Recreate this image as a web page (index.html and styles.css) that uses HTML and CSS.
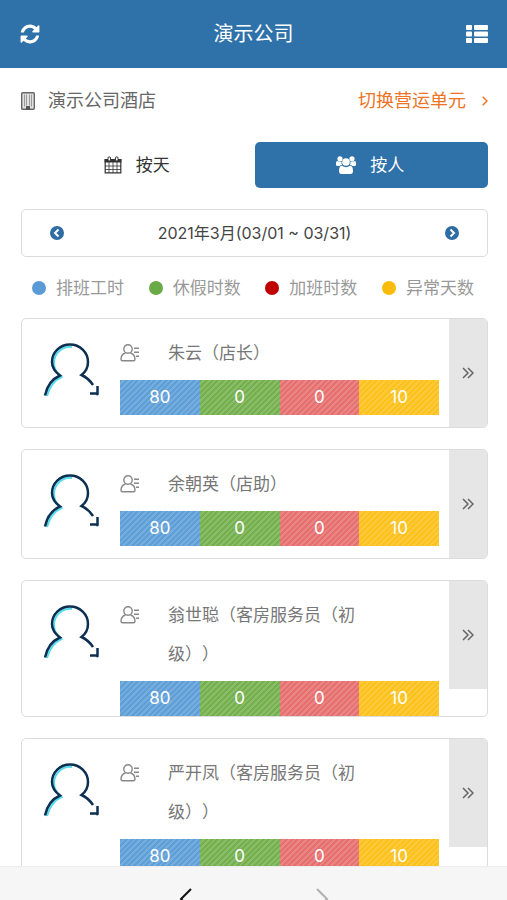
FILE: index.html
```html
<!DOCTYPE html>
<html lang="zh-CN">
<head>
<meta charset="utf-8">
<meta name="viewport" content="width=device-width, initial-scale=1">
<title>演示公司</title>
<link rel="stylesheet" href="styles.css">
</head>
<body>
<svg class="sprite" aria-hidden="true">
  <symbol id="avatar" viewBox="0 0 60 60">
    <g fill="none">
      <path class="avatar-glow" d="M5 55C7.500 46 12.500 39 19.500 36C14 32 12 27 12 22A16 16 0 0 1 30 6"/>
      <path class="avatar-line" d="M3 54.500C5 45 10 38 18 34.500C12 30 10 25.500 10 21A18 17.500 0 0 1 46 21C46 26 44 30.500 39.500 34C44 36 48 39.500 51 44"/>
      <path class="avatar-line" d="M55.500 45V52.500H48M54 51.500l2 2.500"/>
    </g>
  </symbol>
  <symbol id="person" viewBox="0 0 20 18">
    <g fill="none" stroke="currentColor" stroke-width="1.400">
      <circle cx="8" cy="5" r="4.200"/>
      <path d="M5.500 9C2.500 10 1 12.500 1 15.300Q1 16.800 2.500 16.800H13.500Q15 16.800 15 15.300C15 12.500 13.500 10 10.500 9M14 4.200h5M14 8.200h5M16 12.200h3"/>
    </g>
  </symbol>
  <symbol id="more" viewBox="0 0 12 12">
    <path fill="none" stroke="currentColor" stroke-width="1.500" d="M1 1l5 5-5 5M6 1l5 5-5 5"/>
  </symbol>
</svg>
<div class="app">
  <header class="topbar">
    <button class="icon-button" aria-label="刷新"><svg width="22" height="22" viewBox="0 0 1792 1792" fill="currentColor"><path d="M1639 1056q0 5-1 7-64 268-268 434.500t-478 166.500q-146 0-282.500-55t-243.500-157l-129 129q-19 19-45 19t-45-19-19-45v-448q0-26 19-45t45-19h448q26 0 45 19t19 45-19 45l-137 137q71 66 161 102t187 36q134 0 250-65t186-179q11-17 53-117 8-23 30-23h192q13 0 22.500 9.500t9.500 22.500zm25-800v448q0 26-19 45t-45 19h-448q-26 0-45-19t-19-45 19-45l138-138q-148-137-349-137-134 0-250 65t-186 179q-11 17-53 117-8 23-30 23h-199q-13 0-22.500-9.500t-9.500-22.500v-7q65-268 270-434.500t480-166.500q146 0 284 55.500t245 156.500l130-129q19-19 45-19t45 19 19 45z"/></svg></button>
    <h1>演示公司</h1>
    <button class="icon-button" aria-label="菜单"><svg width="22" height="18" viewBox="0 0 22 18" fill="currentColor"><rect width="6" height="5" rx="1"/><rect x="8" width="14" height="5" rx="1"/><rect y="6.500" width="6" height="5" rx="1"/><rect x="8" y="6.500" width="14" height="5" rx="1"/><rect y="13" width="6" height="5" rx="1"/><rect x="8" y="13" width="14" height="5" rx="1"/></svg></button>
  </header>
  <main class="content">
    <div class="unit">
      <svg width="14" height="18" viewBox="0 0 14 18"><g fill="#e2e2e2" stroke="#666"><rect x=".7" y=".7" width="12.600" height="16.600" rx="1" stroke-width="1.400"/><path d="M3.500 2.500v12M5.500 2.500v11M8.500 2.500v11M10.500 2.500v12" stroke="#999"/></g><path fill="#555" d="M5 14h4v4H5z"/></svg>
      <span class="unit-name">演示公司酒店</span>
      <a class="switch" href="#">切换营运单元 <svg width="6" height="10" viewBox="0 0 6 10" fill="none" stroke="currentColor" stroke-width="1.500"><path d="M.7.7L5 5 .7 9.300"/></svg></a>
    </div>
    <nav class="tabs">
      <button class="tab"><svg width="18" height="18" viewBox="0 0 18 18"><path fill="none" stroke="currentColor" stroke-width="1.200" d="M1.200 3.500h15.600v13.300H1.200z"/><path fill="currentColor" d="M.6 3h16.800v3.500H.6z"/><path stroke="currentColor" stroke-width=".8" d="M5 6v11M9 6v11M13 6v11M1 10h16M1 13.500h16"/><rect x="4" y=".8" width="2.500" height="4.200" rx="1.200" fill="#fff" stroke="currentColor"/><rect x="11.500" y=".8" width="2.500" height="4.200" rx="1.200" fill="#fff" stroke="currentColor"/></svg><span>按天</span></button>
      <button class="tab active"><svg width="20" height="18" viewBox="0 0 20 18" fill="currentColor"><circle cx="4" cy="2.800" r="2.600"/><circle cx="16" cy="2.800" r="2.600"/><path d="M0 9V7Q0 5 1.500 5Q4 6.300 5.500 5.500Q5.200 8 6.300 9Q4.500 9 3.500 10H1.500Q0 10 0 9ZM20 9V7Q20 5 18.500 5Q16 6.300 14.500 5.500Q14.800 8 13.700 9Q15.500 9 16.500 10H18.500Q20 10 20 9Z"/><circle cx="10" cy="6" r="3.800"/><path d="M3 15Q3 9.800 6 9.800Q10 12.500 14 9.800Q17 9.800 17 15Q17 18 14.500 18H5.500Q3 18 3 15Z"/></svg><span>按人</span></button>
    </nav>
    <div class="period">
      <button class="step" aria-label="上一月"><svg width="14" height="14" viewBox="0 0 14 14"><circle cx="7" cy="7" r="7" fill="currentColor"/><path d="M8.500 3.500L5 7l3.500 3.500" fill="none" stroke="#fff" stroke-width="2"/></svg></button>
      <span>2021年3月(03/01 ~ 03/31)</span>
      <button class="step" aria-label="下一月"><svg width="14" height="14" viewBox="0 0 14 14"><circle cx="7" cy="7" r="7" fill="currentColor"/><path d="M5.500 3.500L9 7l-3.500 3.500" fill="none" stroke="#fff" stroke-width="2"/></svg></button>
    </div>
    <ul class="legend">
      <li class="shift">排班工时</li>
      <li class="leave">休假时数</li>
      <li class="overtime">加班时数</li>
      <li class="abnormal">异常天数</li>
    </ul>
    <section class="staff">
      <article class="card">
        <svg class="avatar"><use href="#avatar"/></svg>
        <div class="info">
          <div class="person"><svg class="person-icon"><use href="#person"/></svg><h2>朱云（店长）</h2></div>
          <div class="bars"><span class="bar blue">80</span><span class="bar green">0</span><span class="bar red">0</span><span class="bar yellow">10</span></div>
        </div>
        <button class="more" aria-label="详情"><svg width="12" height="12"><use href="#more"/></svg></button>
      </article>
      <article class="card">
        <svg class="avatar"><use href="#avatar"/></svg>
        <div class="info">
          <div class="person"><svg class="person-icon"><use href="#person"/></svg><h2>余朝英（店助）</h2></div>
          <div class="bars"><span class="bar blue">80</span><span class="bar green">0</span><span class="bar red">0</span><span class="bar yellow">10</span></div>
        </div>
        <button class="more" aria-label="详情"><svg width="12" height="12"><use href="#more"/></svg></button>
      </article>
      <article class="card">
        <svg class="avatar"><use href="#avatar"/></svg>
        <div class="info">
          <div class="person"><svg class="person-icon"><use href="#person"/></svg><h2>翁世聪（客房服务员（初级））</h2></div>
          <div class="bars"><span class="bar blue">80</span><span class="bar green">0</span><span class="bar red">0</span><span class="bar yellow">10</span></div>
        </div>
        <button class="more" aria-label="详情"><svg width="12" height="12"><use href="#more"/></svg></button>
      </article>
      <article class="card">
        <svg class="avatar"><use href="#avatar"/></svg>
        <div class="info">
          <div class="person"><svg class="person-icon"><use href="#person"/></svg><h2>严开凤（客房服务员（初级））</h2></div>
          <div class="bars"><span class="bar blue">80</span><span class="bar green">0</span><span class="bar red">0</span><span class="bar yellow">10</span></div>
        </div>
        <button class="more" aria-label="详情"><svg width="12" height="12"><use href="#more"/></svg></button>
      </article>
    </section>
  </main>
  <footer class="toolbar">
    <button class="nav-button" aria-label="后退"><svg width="13" height="22" viewBox="0 0 13 22" fill="none" stroke="currentColor" stroke-width="2"><path d="M12 1L2 11l10 10"/></svg></button>
    <button class="nav-button" aria-label="前进" disabled><svg width="13" height="22" viewBox="0 0 13 22" fill="none" stroke="currentColor" stroke-width="2"><path d="M1 1l10 10L1 21"/></svg></button>
  </footer>
</div>
</body>
</html>
```
FILE: styles.css
```css
* { box-sizing: border-box; }

body {
  margin: 0;
  background: #fff;
  color: #333;
  font: 17px/24px Inter, "Noto Sans CJK SC", sans-serif;
  text-spacing-trim: space-all;
}

button {
  margin: 0;
  padding: 0;
  border: 0;
  background: none;
  color: inherit;
  font: inherit;
}

svg { display: block; flex: none; }

h1, h2, ul { margin: 0; padding: 0; font-weight: 400; }

.sprite { position: absolute; width: 0; height: 0; }

.app {
  display: flex;
  flex-direction: column;
  height: 100vh;
  overflow: hidden;
}

.topbar {
  display: flex;
  flex: none;
  align-items: center;
  justify-content: space-between;
  height: 68px;
  padding: 0 19px;
  background: #2f71a9;
  color: #fff;
}

.topbar h1 { font-size: 20px; }

.content {
  flex: 1;
  min-height: 0;
  padding: 0 19px 0 21px;
  overflow: hidden;
}

.unit {
  display: flex;
  align-items: center;
  gap: 13px;
  height: 66px;
  color: #666;
  font-size: 18px;
}

.switch {
  display: flex;
  align-items: center;
  gap: 16px;
  margin-left: auto;
  color: #ec7424;
  text-decoration: none;
}

.tabs {
  display: grid;
  grid-template-columns: 1fr 1fr;
  margin-top: 8px;
}

.tab {
  display: flex;
  align-items: center;
  justify-content: center;
  gap: 14px;
  height: 46px;
  padding-right: 2px;
  border-radius: 5px;
  color: #333;
  font-size: 17px;
}

.tab.active { background: #2f71a9; color: #fff; }

.period {
  display: flex;
  align-items: center;
  justify-content: space-between;
  height: 48px;
  margin-top: 21px;
  padding: 0 28px;
  border: 1px solid #dcdcdc;
  border-radius: 5px;
  color: #444;
  font-size: 16px;
}

.step { color: #2f6ca3; }

.legend {
  display: flex;
  justify-content: space-between;
  margin-top: 19px;
  padding: 0 14px 0 11px;
  color: #999;
  font-size: 17px;
  list-style: none;
}

.legend li { display: flex; align-items: center; gap: 10px; }

.legend li::before {
  width: 14px;
  height: 14px;
  border-radius: 50%;
  background: currentColor;
  content: "";
}

.shift::before { color: #5b9bd5; }
.leave::before { color: #6aaa46; }
.overtime::before { color: #c00000; }
.abnormal::before { color: #fabc09; }

.staff { display: grid; gap: 21px; margin-top: 18px; }

.card {
  display: flex;
  align-items: flex-start;
  min-height: 110px;
  border: 1px solid #dcdcdc;
  border-radius: 5px;
  overflow: hidden;
}

.avatar { width: 60px; height: 60px; margin: 22px 18px 0 20px; }

.avatar-line { stroke: #0d2f51; stroke-width: 2.5px; }
.avatar-glow { stroke: #55dcee; stroke-width: 2px; }

.info { flex: 1; padding-top: 15px; }

.person {
  display: flex;
  gap: 28px;
  max-width: 248px;
  margin-bottom: 7px;
  color: #777;
}

.person-icon { width: 20px; height: 18px; margin-top: 10px; color: #888; }

.person h2 { font-size: 17px; line-height: 39px; }

.bars { display: grid; grid-template-columns: repeat(4, 1fr); }

.bar {
  height: 35px;
  background-image: repeating-linear-gradient(135deg, transparent 0 2px, rgba(255, 255, 255, 0.15) 2px 4px);
  color: #fff;
  line-height: 35px;
  text-align: center;
}

.blue { background-color: #5f9fd7; }
.green { background-color: #75b04f; }
.red { background-color: #e67070; }
.yellow { background-color: #fcc11a; }

.more {
  display: grid;
  place-items: center;
  width: 38px;
  height: 108px;
  margin-left: 10px;
  background: #e6e6e6;
  color: #666;
}

.toolbar {
  display: flex;
  flex: none;
  justify-content: center;
  gap: 124px;
  height: 34px;
  padding-top: 21px;
  border-top: 1px solid #eee;
  background: #f6f6f6;
  overflow: hidden;
}

.nav-button { height: 22px; color: #111; }
.nav-button:disabled { color: #b0b0b0; }
```
